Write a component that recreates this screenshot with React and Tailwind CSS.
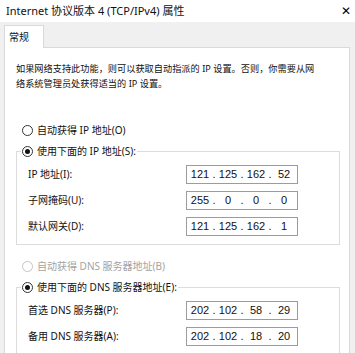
import React from 'react';

const font = "font-['Noto_Sans','Noto_Sans_CJK_SC',sans-serif]";

const Radio = ({ checked, disabled, label }) => (
  <div className={`flex items-center h-[14px] ${disabled ? 'text-[#a3a3a3]' : 'text-[#111]'}`}>
    <span
      className={`w-[11px] h-[11px] shrink-0 rounded-full border bg-white flex items-center justify-center ${
        disabled ? 'border-[#c4c4c4]' : 'border-[#333]'
      }`}
    >
      {checked && <span className="w-[5px] h-[5px] rounded-full bg-[#111]" />}
    </span>
    <span className="ml-[4px] leading-[14px] whitespace-nowrap">{label}</span>
  </div>
);

const IpBox = ({ parts }) => (
  <div className="w-[112px] h-[19px] border border-[#9c9c9c] bg-white flex items-center pl-[2px] font-['Liberation_Sans',sans-serif] text-[11px] text-[#111]">
    {parts.map((p, i) => (
      <React.Fragment key={i}>
        <span className="w-[22px] text-center">{p}</span>
        {i < 3 && <span className="w-[6px] text-center">.</span>}
      </React.Fragment>
    ))}
  </div>
);

const Row = ({ label, parts }) => (
  <div className="flex items-center h-[19px]">
    <span className="w-[158px] text-[#111] whitespace-nowrap">{label}</span>
    <IpBox parts={parts} />
  </div>
);

export default function App() {
  return (
    <div className="w-[355px] h-[353px] bg-[#f0f0f0] overflow-hidden text-[10px]">
      {/* title bar */}
      <div className="h-[22px] w-[355px] bg-white flex items-center justify-between pl-[6px] pr-[4px]">
        <span className={`text-[11px] text-[#111] whitespace-nowrap ${font}`}>Internet 协议版本 4 (TCP/IPv4) 属性</span>
        <span className="font-['DejaVu_Sans',sans-serif] text-[12px] leading-none text-black">✕</span>
      </div>

      {/* tab strip */}
      <div className={`pt-[3px] pl-[4px] ${font}`}>
        <div className="relative z-10 -mb-px w-[40px] h-[23px] bg-white border border-b-0 border-[#d9d9d9] pl-[4px] pt-[4px] text-[#111]">
          常规
        </div>
      </div>

      {/* panel */}
      <div className={`ml-[4px] w-[346px] h-[320px] bg-white border border-[#d9d9d9] px-[11px] pt-[13px] overflow-hidden ${font}`}>
        <p className="leading-[15px] text-[#111] text-[9.2px] whitespace-nowrap">
          如果网络支持此功能，则可以获取自动指派的 IP 设置。否则，你需要从网
          <br />
          络系统管理员处获得适当的 IP 设置。
        </p>

        <div className="mt-[32px] ml-[6px]">
          <Radio label="自动获得 IP 地址(O)" />
        </div>

        <fieldset className="mt-[6px] w-[324px] min-w-0 border border-[#dcdcdc] px-0 pb-[8px]">
          <legend className="ml-[4px] px-[1px] h-[16px] flex items-center">
            <Radio checked label="使用下面的 IP 地址(S):" />
          </legend>
          <div className="mt-[6px] pl-[11px] flex flex-col gap-[7px]">
            <Row label="IP 地址(I):" parts={['121', '125', '162', '52']} />
            <Row label="子网掩码(U):" parts={['255', '0', '0', '0']} />
            <Row label="默认网关(D):" parts={['121', '125', '162', '1']} />
          </div>
        </fieldset>

        <div className="mt-[14px] ml-[6px]">
          <Radio disabled label="自动获得 DNS 服务器地址(B)" />
        </div>

        <fieldset className="mt-[6px] w-[324px] min-w-0 border border-[#dcdcdc] px-0 pb-[8px]">
          <legend className="ml-[4px] px-[1px] h-[16px] flex items-center">
            <Radio checked label="使用下面的 DNS 服务器地址(E):" />
          </legend>
          <div className="mt-[6px] pl-[11px] flex flex-col gap-[7px]">
            <Row label="首选 DNS 服务器(P):" parts={['202', '102', '58', '29']} />
            <Row label="备用 DNS 服务器(A):" parts={['202', '102', '18', '20']} />
          </div>
        </fieldset>
      </div>
    </div>
  );
}
